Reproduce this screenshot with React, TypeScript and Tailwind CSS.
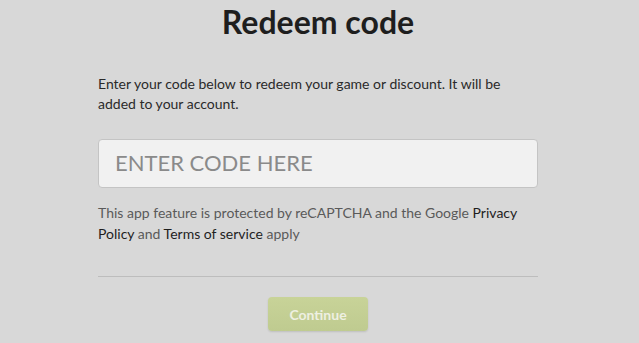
export default function App() {
  return (
    <div
      className="min-h-screen w-full bg-[#d8d8d8] text-[#222]"
      style={{ fontFamily: "Lato, 'Open Sans', sans-serif" }}
    >
      <div className="ml-[98px] w-[440px] pt-[2px]">
        <h1 className="text-center text-[32px] font-bold leading-[40px] text-[#1e1e1e]">
          Redeem code
        </h1>

        <p className="mt-[32px] text-[14px] leading-[20px] text-[#2a2a2a]">
          Enter your code below to redeem your game or discount. It will be
          added to your account.
        </p>

        <input
          type="text"
          placeholder="ENTER CODE HERE"
          className="mt-[25px] block h-[49px] w-full rounded-[4px] border border-[#c4c4c4] bg-[#f1f1f1] px-[16px] pb-[2px] text-[22px] text-[#333] outline-none placeholder:text-[#8a8a8a]"
        />

        <p className="mt-[14px] text-[14px] leading-[21px] text-[#5a5a5a]">
          This app feature is protected by reCAPTCHA and the Google{" "}
          <a className="text-[#1e1e1e]">Privacy</a>{" "}
          <a className="text-[#1e1e1e]">Policy</a> and{" "}
          <a className="text-[#1e1e1e]">Terms of service</a> apply
        </p>

        <div className="mt-[32px] h-px w-full bg-[#bdbdbd]" />

        <div className="mt-[20px] flex justify-center">
          <button
            type="button"
            className="h-[34px] w-[100px] rounded-[4px] bg-gradient-to-b from-[#c8d398] to-[#bfcb90] text-[14px] font-bold text-[#eef0e2] shadow-[0_1px_2px_rgba(0,0,0,0.12)]"
          >
            Continue
          </button>
        </div>
      </div>
    </div>
  );
}
